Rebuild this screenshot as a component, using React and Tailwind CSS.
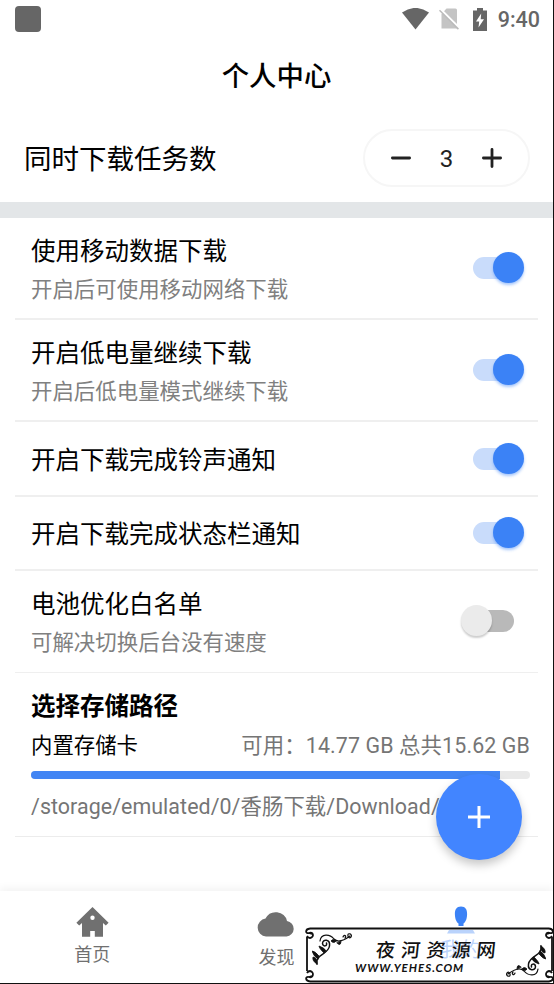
import { useState } from "react";

const initialSettings = [
  { id: "mobile", title: "使用移动数据下载", desc: "开启后可使用移动网络下载", on: true, size: "h-[102px] border-b-2" },
  { id: "battery", title: "开启低电量继续下载", desc: "开启后低电量模式继续下载", on: true, size: "h-[102px] border-b-2" },
  { id: "ring", title: "开启下载完成铃声通知", on: true, size: "h-[75px] border-b-2" },
  { id: "status", title: "开启下载完成状态栏通知", on: true, size: "h-[74px] border-b-2" },
  { id: "whitelist", title: "电池优化白名单", desc: "可解决切换后台没有速度", on: false, size: "h-[102px] border-b pb-[2px]" },
];

function StatusBar() {
  return (
    <div className="flex h-[38px] shrink-0 items-center justify-between pl-[15px] pr-[13px]">
      <div className="h-[26px] w-[26px] rounded-[4px] bg-[#666]" />
      <div className="flex items-center text-[#666]">
        {/* Wifi */}
        <svg width="27" height="22" viewBox="0 0 27 22" fill="currentColor">
          <path d="M0 4.6Q13.5-4.8 27 4.6L13.5 21.5Z" />
        </svg>
        {/* No sim */}
        <svg className="ml-[10px]" width="20" height="22" viewBox="0 0 20 22">
          <path d="M7.5 .5H16.5Q18 .5 18 2V20.5H2.5V6Z" fill="#c4c4c4" />
          <path d="M1.8 1.6L20 19.8" stroke="#fff" strokeWidth="2.4" />
          <path d="M.5 2.2L19.4 21.1" stroke="#bbb" strokeWidth="1.5" />
        </svg>
        {/* Battery */}
        <svg className="ml-[14px]" width="14" height="23" viewBox="0 0 14 23">
          <path d="M4 0H10V2.5H14V23H0V2.5H4Z" fill="currentColor" />
          <path d="M8.2 5.5L3 13.5H6.2L5.5 19.5L11 11.2H7.7Z" fill="#fff" />
        </svg>
        <span className="mt-px ml-[11px] text-[21.5px] leading-none font-medium">9:40</span>
      </div>
    </div>
  );
}

function Switch({ on, onClick }) {
  return (
    <button
      onClick={onClick}
      className={`relative mr-[10px] h-[22px] w-[41px] shrink-0 rounded-full ${on ? "bg-[#c9dcfb]" : "bg-[#b9b9b9]"}`}
    >
      <span
        className={`absolute -top-[5px] h-[31px] w-[31px] rounded-full ${
          on
            ? "left-[20px] bg-[#3b82f6] shadow-[0_2px_3px_rgba(59,130,246,0.45)]"
            : "-left-[12px] bg-[#ebebeb] shadow-[0_2px_2px_rgba(0,0,0,0.2)]"
        }`}
      />
    </button>
  );
}

function SettingRow({ item, onToggle }) {
  return (
    <div className={`mx-[15px] flex items-center justify-between border-[#efefef] pr-[14px] pl-4 ${item.size}`}>
      <div className="pt-[4px]">
        <p className="text-[24.5px] leading-[36px] text-black">{item.title}</p>
        {item.desc && <p className="mt-[4px] text-[21.45px] leading-[32px] text-[#808080]">{item.desc}</p>}
      </div>
      <Switch on={item.on} onClick={onToggle} />
    </div>
  );
}

/* Scroll leaf used in two corners of the banner */
function Flourish({ className }) {
  return (
    <svg className={className} width="42" height="34" viewBox="0 0 42 34" fill="none" stroke="#111" strokeLinecap="round">
      <path d="M5 31C3 21 16 22 17.5 13C18.5 6 10.5 5.5 10.5 10.5C11 14 15.5 13.5 14.5 10" strokeWidth="1.5" />
      <path d="M8 8C9 0 18 1 22 6C27 11 34 6 38 3" strokeWidth="1.2" />
      <path d="M31 4C32 1 35 3 33 5M36 3C35-1 41 1 39 4Q37 6 36 3" strokeWidth="1.2" />
      <path d="M7 23Q3 18 0 18Q2 24 6 26ZM12 20Q7 15 7 13Q13 15 14 18ZM5 31Q0 28 1 24Q6 25 5 31ZM24 8Q22 11 19 8Q21 5 24 8ZM29 8Q29 14 25 10Z" fill="#111" strokeWidth=".8" />
    </svg>
  );
}

function Banner() {
  return (
    <div className="absolute top-[927px] left-[305px] h-[57px] w-[249px]">
      <svg className="absolute inset-0" width="249" height="57" viewBox="0 0 249 57" fill="none" stroke="#111" strokeWidth="1.8">
        <path d="M5 1.5H244V9H247.5V47H244V54.5H5V47H1.5V9H5Z" fill="#fff" fillOpacity=".65" stroke="none" />
        <path d="M5 1.5H244M5 54.5H244M2 10V44M247 10V44" />
        <path d="M5 1.5C0 2 0 7 4 6C8 4 10 10 5 11Q3 11 2 9M4 6L7 7" />
        <path d="M244 1.5C249 2 249 7 245 6C241 4 239 10 244 11Q246 11 247 9M245 6L242 7" />
        <path d="M5 54.5C0 54 0 49 4 50C8 52 10 45 5 44Q3 44 2 46M4 50L7 49" />
        <path d="M244 54.5C249 54 249 49 245 50C241 52 239 45 244 44Q246 44 247 46M245 50L242 49" />
      </svg>
      <Flourish className="absolute top-[6px] left-[7px]" />
      <Flourish className="absolute top-[16px] left-[199px] rotate-180" />
      <p className="absolute top-[10px] left-[71px] -skew-x-6 font-['Liberation_Serif','Noto_Sans_CJK_SC',serif] text-[19px] leading-[27px] font-medium tracking-[6.2px] whitespace-nowrap text-[#111]">
        夜河资源网
      </p>
      <p className="absolute top-[34px] left-[50px] font-['Lato',sans-serif] text-[11.5px] leading-[14px] font-bold tracking-[1px] whitespace-nowrap text-[#111] italic">
        WWW.YEHES.COM
      </p>
    </div>
  );
}

export default function App() {
  const [count, setCount] = useState(3);
  const [settings, setSettings] = useState(initialSettings);

  const toggle = (id) => {
    setSettings(settings.map((s) => (s.id === id ? { ...s, on: !s.on } : s)));
  };

  return (
    <div className="relative flex h-[984px] w-[554px] flex-col overflow-hidden border-r border-b border-[#111] bg-white font-[Roboto,'Noto_Sans_CJK_SC',sans-serif]">
      <StatusBar />

      <h1 className="h-[78px] shrink-0 pt-[19px] text-center text-[27.4px] leading-[40px] font-medium text-black">个人中心</h1>

      {/* Simultaneous downloads */}
      <div className="flex h-[86px] shrink-0 items-center justify-between pr-[23px] pl-[24px]">
        <span className="pt-[2px] text-[27.5px] leading-[40px] text-black">同时下载任务数</span>
        <div className="mt-[-2px] flex h-[58px] w-[167px] items-center justify-between rounded-full border-2 border-[#f6f6f6] px-[26px]">
          <button onClick={() => setCount(Math.max(1, count - 1))}>
            <svg width="20" height="20" viewBox="0 0 20 20" stroke="#222" strokeWidth="2.8" strokeLinecap="round">
              <path d="M1.4 10H18.6" />
            </svg>
          </button>
          <span className="pt-[2px] text-[24px] leading-none text-[#222]">{count}</span>
          <button onClick={() => setCount(count + 1)}>
            <svg width="20" height="20" viewBox="0 0 20 20" stroke="#222" strokeWidth="2.8" strokeLinecap="round">
              <path d="M1.4 10H18.6M10 1.4V18.6" />
            </svg>
          </button>
        </div>
      </div>

      <div className="h-[16px] shrink-0 bg-[#e3e6e8]" />

      {/* Settings */}
      <div className="shrink-0">
        {settings.map((item) => (
          <SettingRow key={item.id} item={item} onToggle={() => toggle(item.id)} />
        ))}
      </div>

      {/* Storage */}
      <div className="mx-[15px] h-[164px] shrink-0 border-b border-[#ececec] pt-[16px] pr-2 pl-4">
        <h2 className="text-[24.5px] leading-[36px] font-bold text-black">选择存储路径</h2>
        <div className="mt-[5px] flex justify-between text-[21.4px] leading-[32px]">
          <span className="text-black">内置存储卡</span>
          <span className="tracking-[0.12px] text-[#757575]">可用：14.77 GB 总共15.62 GB</span>
        </div>
        <div className="mt-[9px] h-2 overflow-hidden rounded-full bg-[#e9e9e9]">
          <div className="h-full w-[94%] bg-[#4285f4]" />
        </div>
        <p className="mt-[12px] text-[21.4px] leading-[32px] tracking-[0.06px] whitespace-nowrap text-[#757575]">/storage/emulated/0/香肠下载/Download/</p>
      </div>

      {/* Bottom tabs */}
      <div className="mt-auto flex h-[92px] shrink-0 text-[18px] leading-[24px] text-[#707070] shadow-[0_-3px_8px_rgba(0,0,0,0.05)]">
        <div className="flex flex-1 flex-col items-center pt-[16px]">
          <svg width="33" height="30" viewBox="0 0 33 30" fill="currentColor" fillRule="evenodd">
            <path d="M16.5 0L32.6 15.8L29.8 18.6L27 16V29.8H18.8V24H14.2V29.8H6V16L3.2 18.6L.4 15.8ZM16.5 8.6A2.2 2.2 0 1 0 16.5 13A2.2 2.2 0 1 0 16.5 8.6Z" />
          </svg>
          <span className="mt-[6px]">首页</span>
        </div>
        <div className="flex flex-1 flex-col items-center pt-[20px]">
          <svg width="38" height="26" viewBox="0 0 38 26" fill="currentColor">
            <path d="M9 25.5A9 9 0 0 1 8.5 7.6A11.5 11.5 0 0 1 30 10A7.8 7.8 0 0 1 29.5 25.5Z" />
          </svg>
          <span className="mt-[9px]">发现</span>
        </div>
        <div className="flex flex-1 flex-col items-center pt-[15px] text-[#3b82f6]">
          <svg width="28" height="28" viewBox="0 0 28 28" fill="currentColor">
            <path d="M14 .5C18.5 .5 20.3 3.5 20.1 8.5C19.9 13.5 18.5 16 16.5 17.5V20H11.5V17.5C9.5 16 8.1 13.5 7.9 8.5C7.7 3.5 9.5 .5 14 .5Z" />
            <path d="M2 24H26L28 27.5H0Z" />
          </svg>
          <span className="mt-[4px] text-[20px]">我的</span>
        </div>
      </div>

      {/* Floating add button */}
      <button className="absolute top-[774px] left-[436px] flex h-[86px] w-[86px] items-center justify-center rounded-full bg-[#4285ff] shadow-[0_5px_10px_rgba(0,0,0,0.22)]">
        <svg width="22" height="22" viewBox="0 0 22 22" stroke="#fff" strokeWidth="3">
          <path d="M0 11H22M11 0V22" />
        </svg>
      </button>

      <Banner />
    </div>
  );
}
